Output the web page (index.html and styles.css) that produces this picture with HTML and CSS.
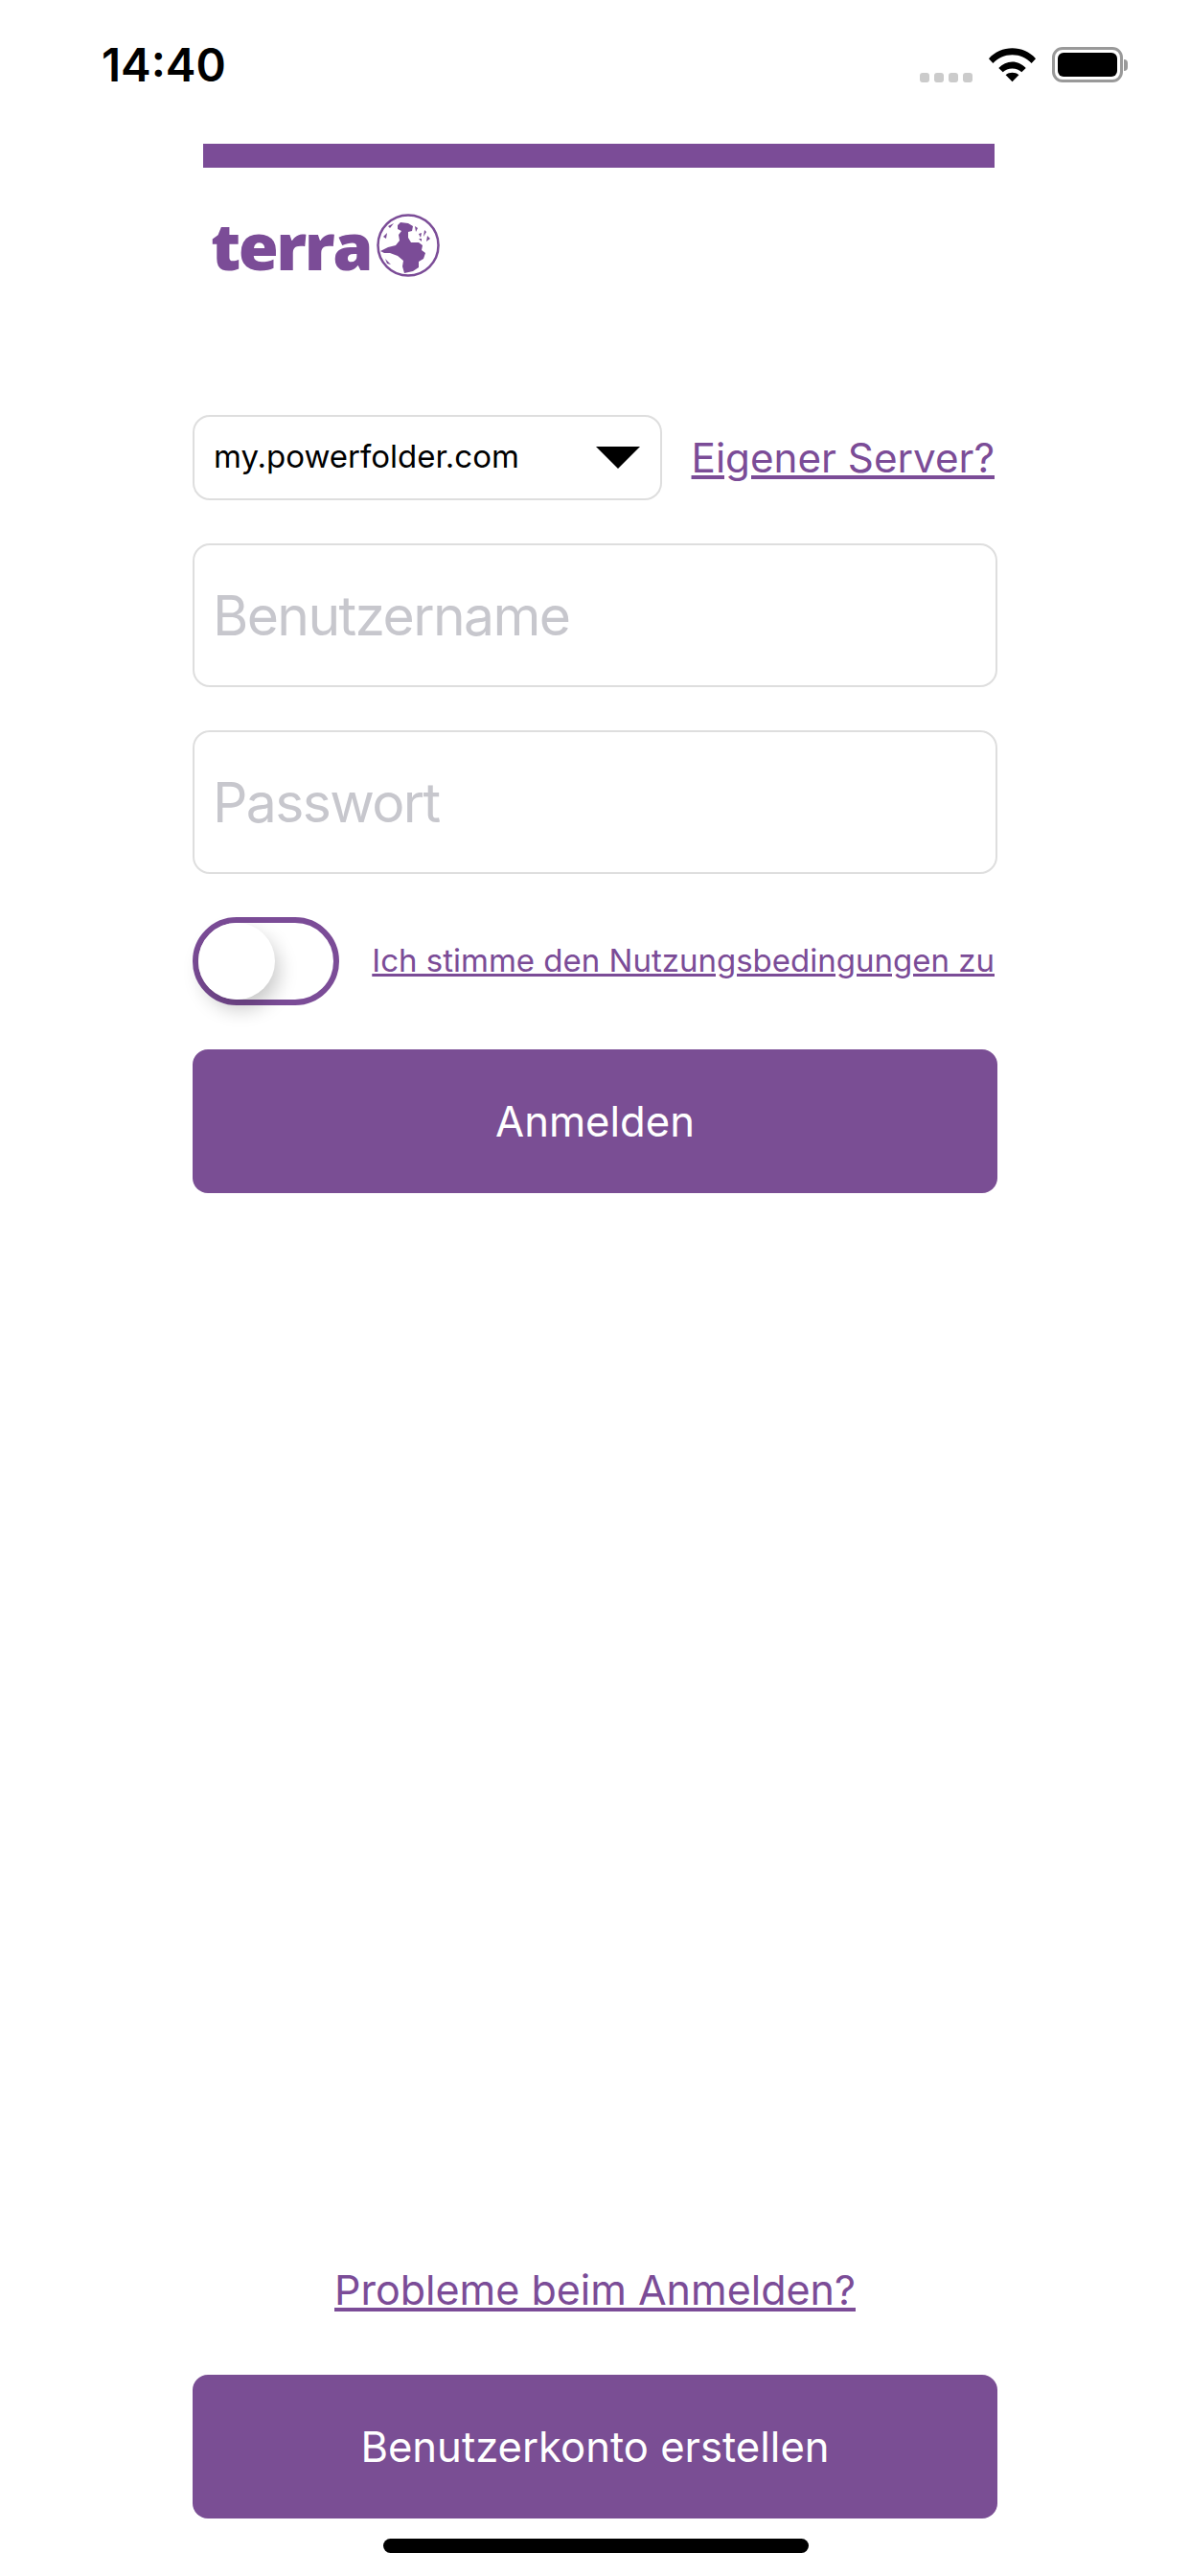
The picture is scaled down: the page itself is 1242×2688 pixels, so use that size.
FILE: index.html
```html
<!DOCTYPE html>
<html>
<head>
	<meta charset="UTF-8">
	<meta name="viewport" content="width=device-width,initial-scale=1" />
	<title>Anmelden</title>
	<link rel="stylesheet" href="styles.css">
</head>
<body>
	<div class="status_bar">
		<span class="time">14:40</span>
		<div class="status_icons">
			<div class="signal"><i></i><i></i><i></i><i></i></div>
			<svg class="wifi" width="49" height="37" viewBox="0 0 50 36">
				<path d="M0 11.500C6.500 4.500 15.500 0.500 25 0.500S43.500 4.500 50 11.500L45.500 16.500C40 10.500 33 7.500 25 7.500S10 10.500 4.500 16.500Z" />
				<path d="M10.500 21.500C14.500 17.500 19.500 15 25 15S35.500 17.500 39.500 21.500L35 26C32.500 23.500 29 22 25 22S17.500 23.500 15 26Z" />
				<path d="M18 29C20 27.300 22.500 26.500 25 26.500S30 27.300 32 29L25 36Z" />
			</svg>
			<div class="battery"><div class="battery_level"></div></div>
			<div class="battery_cap"></div>
		</div>
	</div>

	<div class="main">
		<div class="top_bar"></div>
		<div class="logo">
			<span class="logo_text">terra</span>
			<svg class="globe" width="66" height="66" viewBox="0 0 66 66">
				<circle cx="33" cy="33" r="31.500" fill="none" stroke="#7b4c97" stroke-width="2.500" />
				<path d="M22 12L25 9L33 10L38 13L37 18L33 19L33 25L36 30L44 30L48 33L47 38L51 41L49 47L44 50L44 56L38 60L29 62L27 55L28 49L22 44L14 41L8 41L4 39L12 35L20 33L24 28L23 22L26 18L22 16Z" fill="#7b4c97" />
				<path d="M40 13L43 15L41 19ZM44 21L47 20L46 25ZM50 17L52 19L49 24ZM53 23L56 26L52 29ZM44 26L47 26L47 29ZM7 24L11 20L10 26ZM12 13L18 10L14 15ZM9 47L15 53L11 52Z" fill="#7b4c97" />
			</svg>
		</div>

		<div class="server_row">
			<div class="select">
				<span class="select_text">my.powerfolder.com</span>
				<div class="select_arrow"></div>
			</div>
			<a class="link server_link" href="#">Eigener Server?</a>
		</div>

		<input class="field" type="text" placeholder="Benutzername">
		<input class="field" type="password" placeholder="Passwort">

		<div class="terms_row">
			<div class="toggle"><div class="knob"></div></div>
			<a class="link terms_link" href="#">Ich stimme den Nutzungsbedingungen zu</a>
		</div>

		<button class="btn login_btn">Anmelden</button>

		<a class="link help_link" href="#">Probleme beim Anmelden?</a>
		<button class="btn">Benutzerkonto erstellen</button>
	</div>

	<div class="home_indicator"></div>
</body>
</html>
```

FILE: styles.css
```css
* {
	padding: 0;
	margin: 0;
	box-sizing: border-box;
}

body {
	width: 1242px;
	height: 2688px;
	background: #fff;
	font-family: Inter, "Liberation Sans", sans-serif;
	display: flex;
	flex-direction: column;
	overflow: hidden;
}

.status_bar {
	height: 150px;
	padding: 39px 0 0 106px;
	display: flex;
	justify-content: space-between;
	align-items: flex-start;
}

.time {
	font-size: 47.500px;
	font-weight: 600;
	line-height: 58px;
	color: #000;
}

.status_icons {
	display: flex;
	align-items: flex-end;
	height: 37px;
	margin: 10px 0 0 0;
	padding-right: 65px;
}

.signal {
	display: flex;
	gap: 5px;
	margin-right: 17px;
}

.signal i {
	display: block;
	width: 10px;
	height: 10px;
	border-radius: 3px;
	background: #cbcbcb;
}

.wifi {
	fill: #000;
	margin-right: 17px;
}

.battery {
	width: 74px;
	height: 37px;
	border: 3px solid #999;
	border-radius: 11px;
	padding: 3px;
}

.battery_level {
	width: 100%;
	height: 100%;
	background: #000;
	border-radius: 6px;
}

.battery_cap {
	width: 4px;
	height: 12px;
	margin: 0 0 12px 1px;
	background: #999;
	border-radius: 0 4px 4px 0;
}

.main {
	flex: 1;
	padding: 0 201px 60px 201px;
	display: flex;
	flex-direction: column;
}

.top_bar {
	height: 25px;
	margin: 0 3px 0 11px;
	background: #7b4c97;
}

.logo {
	display: flex;
	align-items: center;
	height: 66px;
	margin: 48px 0 144px 19px;
}

.logo_text {
	font-family: "Open Sans", sans-serif;
	font-size: 68px;
	font-weight: 800;
	line-height: 66px;
	color: #7b4c97;
	letter-spacing: -2.500px;
	margin-right: 6px;
}

.server_row {
	display: flex;
	align-items: center;
	justify-content: space-between;
	padding-right: 3px;
}

.select {
	width: 490px;
	height: 89px;
	border: 2px solid #dedede;
	border-radius: 18px;
	padding: 0 21px 0 20px;
	display: flex;
	align-items: center;
	justify-content: space-between;
	font-size: 33px;
	color: #000;
}

.select_text {
	margin-bottom: 3px;
}

.select_arrow {
	width: 0;
	height: 0;
	border-left: 23px solid transparent;
	border-right: 23px solid transparent;
	border-top: 23px solid #000;
}

.link {
	color: #7b4c97;
	text-decoration: underline;
}

.server_link {
	font-size: 42.200px;
}

.field {
	display: block;
	width: 840px;
	height: 150px;
	border: 2px solid #dedede;
	border-radius: 18px;
	margin-top: 45px;
	padding: 0 19px;
	font-family: inherit;
	font-size: 57px;
	letter-spacing: -1.600px;
	outline: none;
	background: #fff;
}

.field::placeholder {
	color: #c7c7cd;
	opacity: 1;
}

.terms_row {
	display: flex;
	align-items: center;
	justify-content: space-between;
	margin-top: 45px;
	padding-right: 3px;
}

.toggle {
	width: 153px;
	height: 92px;
	border: 6px solid #7b4c97;
	border-radius: 46px;
	background: #fff;
}

.knob {
	width: 80px;
	height: 80px;
	border-radius: 50%;
	background: #fff;
	box-shadow: 4px 10px 20px rgba(0, 0, 0, 0.22);
}

.terms_link {
	font-size: 33px;
	margin-bottom: 3px;
}

.btn {
	display: block;
	width: 840px;
	height: 150px;
	border: none;
	border-radius: 16px;
	background: #7a4e94;
	color: #fff;
	font-family: inherit;
	font-size: 43.600px;
}

.login_btn {
	margin-top: 46px;
}

.help_link {
	margin-top: auto;
	margin-bottom: 63px;
	text-align: center;
	font-size: 43px;
	line-height: 52px;
}

.home_indicator {
	position: absolute;
	left: 400px;
	top: 2649px;
	width: 444px;
	height: 15px;
	border-radius: 8px;
	background: #000;
}
```
